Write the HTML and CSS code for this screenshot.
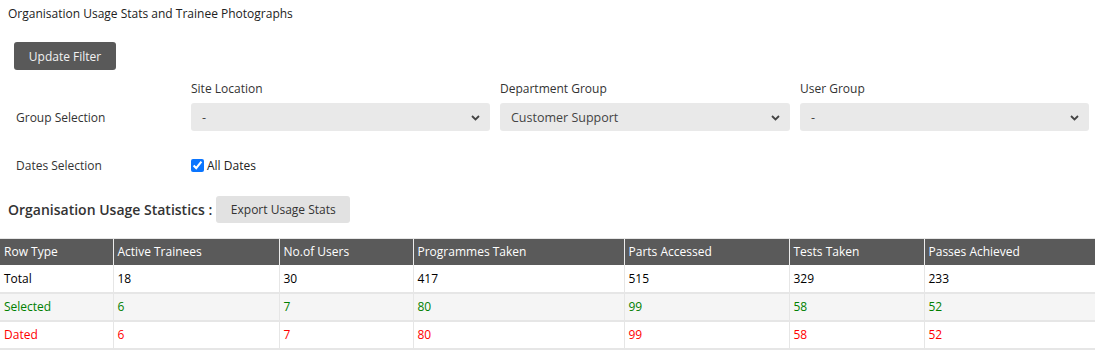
FILE: index.html
```html
<!DOCTYPE html>
<html lang="en">
<head>
  <meta charset="UTF-8">
  <title>Organisation Usage Stats</title>
  <link rel="stylesheet" href="styles.css">
</head>
<body>

  <div class="page-title">Organisation Usage Stats and Trainee Photographs</div>

  <div class="filter-bar">
    <button class="btn-dark">Update Filter</button>
  </div>

  <div class="filters">
    <div class="filter-label row-head"></div>
    <div class="field-label">Site Location</div>
    <div class="field-label">Department Group</div>
    <div class="field-label">User Group</div>

    <div class="filter-label">Group Selection</div>
    <div class="select-box"><span>-</span><svg class="chev" width="9" height="6" viewBox="0 0 9 6"><path d="M1 1l3.5 3.5L8 1" fill="none" stroke="#444" stroke-width="1.8"/></svg></div>
    <div class="select-box"><span>Customer Support</span><svg class="chev" width="9" height="6" viewBox="0 0 9 6"><path d="M1 1l3.5 3.5L8 1" fill="none" stroke="#444" stroke-width="1.8"/></svg></div>
    <div class="select-box"><span>-</span><svg class="chev" width="9" height="6" viewBox="0 0 9 6"><path d="M1 1l3.5 3.5L8 1" fill="none" stroke="#444" stroke-width="1.8"/></svg></div>

    <div class="filter-label dates">Dates Selection</div>
    <label class="check dates"><input type="checkbox" checked> All Dates</label>
  </div>

  <div class="stats-head">
    <h2>Organisation Usage Statistics :</h2>
    <button class="btn-light">Export Usage Stats</button>
  </div>

  <table class="stats">
    <colgroup>
      <col style="width:113px">
      <col style="width:166px">
      <col style="width:134px">
      <col style="width:211px">
      <col style="width:165px">
      <col style="width:135px">
      <col>
    </colgroup>
    <thead>
      <tr>
        <th>Row Type</th>
        <th>Active Trainees</th>
        <th>No.of Users</th>
        <th>Programmes Taken</th>
        <th>Parts Accessed</th>
        <th>Tests Taken</th>
        <th>Passes Achieved</th>
      </tr>
    </thead>
    <tbody>
      <tr>
        <td>Total</td><td>18</td><td>30</td><td>417</td><td>515</td><td>329</td><td>233</td>
      </tr>
      <tr class="selected">
        <td>Selected</td><td>6</td><td>7</td><td>80</td><td>99</td><td>58</td><td>52</td>
      </tr>
      <tr class="dated">
        <td>Dated</td><td>6</td><td>7</td><td>80</td><td>99</td><td>58</td><td>52</td>
      </tr>
    </tbody>
  </table>

</body>
</html>
```

FILE: styles.css
```css
* { margin: 0; padding: 0; box-sizing: border-box; }
body { font-family: 'Open Sans', sans-serif; font-size: 12px; color: #222; background: #fff; }

.page-title { padding: 5px 8px 0; line-height: 17px; }

.filter-bar { padding: 20px 14px 0; }
.btn-dark {
  font-family: inherit; font-size: 12px; color: #f2f2f2; background: #595959;
  border: none; border-radius: 3px; width: 102px; height: 28px; cursor: pointer;
}

.filters {
  display: grid;
  grid-template-columns: 165px 299px 290px 289px;
  column-gap: 10px;
  padding: 10px 0 0 16px;
  align-items: center;
}
.field-label { height: 23px; line-height: 17px; color: #333; }
.filter-label { color: #333; }
.select-box {
  height: 28px; background: #e9e9e9; border-radius: 3px;
  display: flex; align-items: center; justify-content: space-between;
  padding: 0 10px 0 11px; color: #444; font-size: 12.5px;
}
.select-box .chev { margin-top: 1px; }
.filters .dates { margin-top: 21px; height: 27px; display: flex; align-items: center; }
.check { display: flex; align-items: center; color: #222; }
.check input { width: 13px; height: 13px; margin: 0 3px 0 0; accent-color: #0a75ff; }

.stats-head { display: flex; align-items: center; padding: 17px 8px 0; gap: 4px; }
.stats-head h2 { font-size: 14px; font-weight: 600; color: #333; }
.btn-light {
  font-family: inherit; font-size: 12px; color: #333; background: #e2e2e2;
  border: none; border-radius: 3px; width: 134px; height: 27px; cursor: pointer;
}

.stats { width: 100%; border-collapse: collapse; table-layout: fixed; margin-top: 15px; }
.stats th {
  background: #5a5a5a; color: #fff; font-weight: 400; text-align: left;
  height: 26px; padding: 0 4px; border-left: 1px solid #ececec; border-top: 1px solid #e6e6e6;
}
.stats td {
  height: 28px; padding: 0 4px; border-left: 1px solid #e6e6e6; border-bottom: 2px solid #e6e6e6;
  color: #000;
}
.stats th:first-child, .stats td:first-child { border-left: none; }
.stats tr.selected td { background: #f5f5f5; color: #008000; }
.stats tr.dated td { color: #ff0000; }
```
